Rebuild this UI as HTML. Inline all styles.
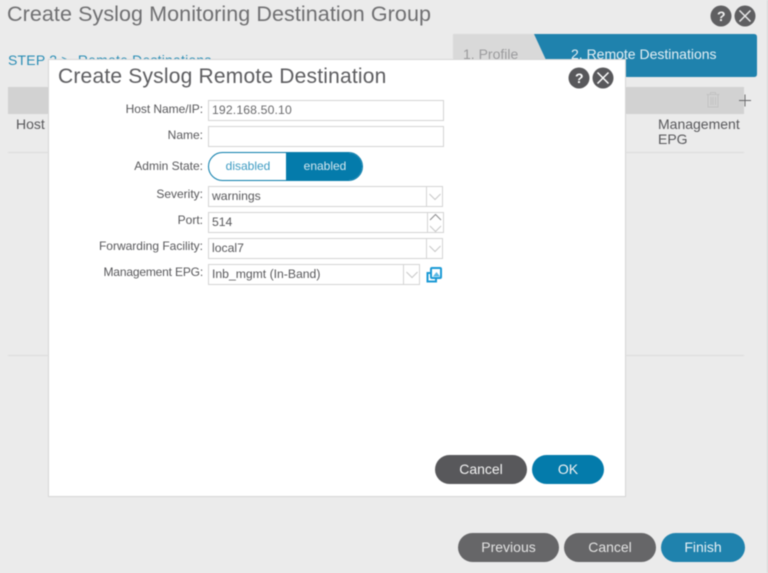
<!DOCTYPE html>
<html><head><meta charset="utf-8"><style>
html,body{margin:0;padding:0;width:768px;height:573px;overflow:hidden;background:#ebebeb}
body{font-family:"Liberation Sans",sans-serif;position:relative}
#r{position:absolute;left:0;top:0;width:768px;height:573px;filter:blur(.4px)}
.a,.t,.f,.l,.b{position:absolute;box-sizing:border-box}
.t{white-space:nowrap;line-height:1}
.l{white-space:nowrap;text-align:right;right:565px;color:#58585b;font-size:12px;line-height:14px}
.f{left:208px;height:21px;border:1px solid #d4d4d4;background:#fff;color:#58585b;font-size:12.2px;line-height:18px;padding-left:3px}
.b{height:29px;border-radius:15px;color:#f2f2f2;text-align:center;font-size:14px;line-height:28px}
svg{position:absolute;overflow:visible}
</style></head><body><div id="r">
<div class="a" style="left:767px;top:0;width:1px;height:573px;background:#d5d5d5"></div>
<div class="t" style="left:7px;top:4px;font-size:21.5px;letter-spacing:.08px;color:#6f6f71">Create Syslog Monitoring Destination Group</div>
<svg style="left:0;top:0" width="768" height="573">
<circle cx="721" cy="16" r="10.5" fill="#5f5f61"/><circle cx="745" cy="16" r="10.5" fill="#5f5f61"/>
<path d="M739.5 10.5l11 11M750.5 10.5l-11 11" stroke="#e8e8e8" stroke-width="1.5"/>
<path d="M453 34H535L546 60L539 77H453Z" fill="#d9d9d9"/>
<path d="M534 34H754Q757 34 757 37V74Q757 77 754 77H539L546 60Z" fill="#1f82ad"/>
<rect x="8" y="87" width="736" height="27" fill="#d2d2d2"/>
<rect x="8" y="152" width="736" height="1" fill="#dcdcdc"/>
<rect x="8" y="355" width="736" height="1" fill="#dcdcdc"/>
<path d="M706.500 94.500H719.500M710.500 94V92.500H715.500V94M708 95V107H718V95M711 97V105M713 97V105M715.500 97V105" fill="none" stroke="#c3c3c3" stroke-width="1"/>
<path d="M739 100.500H751M745 94.500V106.500" stroke="#68686a" stroke-width="1"/>
</svg>
<div class="t" style="left:721px;top:9px;width:0;font-size:14px;font-weight:bold;color:#f0f0f0;text-indent:-4px">?</div>
<div class="t" style="left:8px;top:53px;font-size:14px;letter-spacing:.2px;color:#2a8db5">STEP 2 &gt;&nbsp; Remote Destinations</div>
<div class="t" style="left:463px;top:47px;font-size:14px;color:#9b9b9d">1. Profile</div>
<div class="t" style="left:571px;top:47px;font-size:14px;letter-spacing:0;color:#e4eff4">2. Remote Destinations</div>
<div class="t" style="left:16px;top:117px;font-size:14px;color:#58585b">Host</div>
<div class="t" style="left:658px;top:117px;font-size:14px;color:#58585b;line-height:14.500px">Management<br>EPG</div>

<div class="a" style="left:48px;top:59px;width:578px;height:438px;background:#fff;border:1px solid #d6d6d6"></div>
<div class="t" style="left:58px;top:66px;font-size:21px;letter-spacing:.2px;color:#5d5d60">Create Syslog Remote Destination</div>
<svg style="left:0;top:0" width="768" height="573">
<circle cx="579" cy="78" r="10.500" fill="#58585b"/><circle cx="603" cy="78" r="10.500" fill="#58585b"/>
<path d="M597.500 72.500l11 11M608.500 72.500l-11 11" stroke="#fff" stroke-width="1.5"/>
</svg>
<div class="t" style="left:579px;top:71px;width:0;font-size:14px;font-weight:bold;color:#fff;text-indent:-4px">?</div>

<div class="l" style="top:102px;letter-spacing:-.05px">Host Name/IP:</div>
<div class="f" style="top:100px;width:236px;color:#6a6a6c;letter-spacing:.15px">192.168.50.10</div>
<div class="l" style="top:128px">Name:</div>
<div class="f" style="top:126px;width:236px"></div>
<div class="l" style="top:159px">Admin State:</div>
<div class="a" style="left:208px;top:152px;width:155px;height:29px;border:1px solid #0a7cab;border-radius:15px;background:#fff;overflow:hidden">
<div class="a" style="left:77px;top:0;width:77px;height:27px;background:#047bab"></div>
<div class="t" style="left:0;top:7px;width:78px;text-align:center;font-size:12px;color:#3d9bc2">disabled</div>
<div class="t" style="left:78px;top:7px;width:76px;text-align:center;font-size:12px;color:#d5e8f0">enabled</div>
</div>
<div class="l" style="top:187px">Severity:</div>
<div class="f" style="top:186px;width:235px">warnings</div>
<div class="l" style="top:213px">Port:</div>
<div class="f" style="top:212px;width:236px">514</div>
<div class="l" style="top:239px">Forwarding Facility:</div>
<div class="f" style="top:238px;width:235px">local7</div>
<div class="l" style="top:265px;letter-spacing:-.17px">Management EPG:</div>
<div class="f" style="top:264px;width:212px">Inb_mgmt (In-Band)</div>
<svg style="left:0;top:0" width="768" height="573">
<path d="M426.500 186V207M426.500 238V259M403.500 264V285M427.500 212V233" stroke="#d4d4d4" fill="none"/>
<path d="M429.500 194l5.500 5.500 5.500-5.500M429.500 246l5.500 5.500 5.500-5.500M406.500 272l5.500 5.500 5.500-5.500" fill="none" stroke="#c8c8c8" stroke-width="1"/>
<path d="M430 220l5.500-5.500 5.500 5.500" fill="none" stroke="#8d8d8f" stroke-width="1"/>
<path d="M430 226l5.500 5.500 5.500-5.500" fill="none" stroke="#c8c8c8" stroke-width="1"/>
<path d="M431 273H427.500V281.500H436V278" fill="none" stroke="#1b9ad6" stroke-width="2"/>
<rect x="431" y="268" width="10" height="10" rx="1" fill="#fff" stroke="#1b9ad6" stroke-width="2"/>
<path d="M433 276.500L436.500 272L440 276.500Z" fill="#5ab8e4"/>
</svg>

<div class="b" style="left:435px;top:455px;width:92px;background:#58585b">Cancel</div>
<div class="b" style="left:532px;top:455px;width:72px;background:#047bab">OK</div>
<div class="b" style="left:458px;top:533px;width:101px;background:#666668;color:#e2e2e2">Previous</div>
<div class="b" style="left:564px;top:533px;width:92px;background:#666668;color:#e2e2e2">Cancel</div>
<div class="b" style="left:661px;top:533px;width:84px;background:#1f82ad;color:#e6f0f5">Finish</div>
</div></body></html>
